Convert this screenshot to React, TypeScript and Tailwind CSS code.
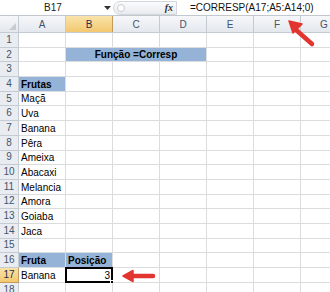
const COLS = ["A", "B", "C", "D", "E", "F", "G"];

type Cell = { text?: string; bold?: boolean; fill?: boolean; right?: boolean; span?: number; center?: boolean; selected?: boolean };

const rows: Record<number, Record<number, Cell>> = {
  2: { 1: { text: "Função =Corresp", bold: true, fill: true, span: 3, center: true } },
  4: { 0: { text: "Frutas", bold: true, fill: true } },
  5: { 0: { text: "Maçã" } },
  6: { 0: { text: "Uva" } },
  7: { 0: { text: "Banana" } },
  8: { 0: { text: "Pêra" } },
  9: { 0: { text: "Ameixa" } },
  10: { 0: { text: "Abacaxi" } },
  11: { 0: { text: "Melancia" } },
  12: { 0: { text: "Amora" } },
  13: { 0: { text: "Goiaba" } },
  14: { 0: { text: "Jaca" } },
  16: { 0: { text: "Fruta", bold: true, fill: true }, 1: { text: "Posição", bold: true, fill: true } },
  17: { 0: { text: "Banana" }, 1: { text: "3", right: true, selected: true } },
};

function SheetRow({ n }: { n: number }) {
  const def = rows[n] ?? {};
  const cells = [];
  for (let c = 0; c < COLS.length; c++) {
    const cell = def[c];
    const span = cell?.span ?? 1;
    cells.push(
      <div
        key={c}
        style={{ width: 47 * span }}
        className={`relative flex h-full shrink-0 items-end px-[2px] pb-[1px] leading-none text-[10px] text-black border-r border-b border-[#dadcdd] ${
          cell?.fill ? "bg-[#95b3d7]" : "bg-white"
        } ${cell?.bold ? "font-bold" : ""} ${cell?.right ? "justify-end" : ""} ${cell?.center ? "justify-center" : ""}`}
      >
        {cell?.text}
        {cell?.selected && (
          <>
            <div className="absolute -left-px -top-px bottom-[-1px] right-[-1px] border-2 border-black" />
            <div className="absolute -bottom-[3px] -right-[3px] h-[5px] w-[5px] border border-white bg-black" />
          </>
        )}
      </div>
    );
    c += span - 1;
  }
  const active = n === 17;
  return (
    <div className="flex h-[14.7px] shrink-0">
      <div
        className={`flex h-full w-[19px] shrink-0 items-center justify-center border-r border-b text-[10px] leading-none ${
          active
            ? "border-[#c29b5c] bg-gradient-to-b from-[#f9e3a9] to-[#f3c86f] text-[#1e2f4a]"
            : "border-[#c5cbd3] bg-[#e9edf2] text-[#44546a]"
        }`}
      >
        {n}
      </div>
      {cells}
    </div>
  );
}

export default function App() {
  const nums = Array.from({ length: 18 }, (_, i) => i + 1);
  return (
    <div className="relative h-[292px] w-[330px] overflow-hidden bg-white font-['Liberation_Sans',Arial,sans-serif]">
      {/* Formula bar */}
      <div className="flex h-[16px] items-center border-b border-[#c3c8cf] bg-white">
        <div className="flex h-full w-[113px] shrink-0 items-center">
          <span className="flex-1 pl-[2px] text-center text-[10px] text-[#222]">B17</span>
          <svg width="7" height="4" viewBox="0 0 7 4" className="mr-[2px]">
            <path d="M0 0h7L3.5 4z" fill="#333" />
          </svg>
        </div>
        <div className="relative flex h-[14px] w-[64px] shrink-0 items-center justify-end rounded-l-full border border-[#d3d7dc] bg-gradient-to-b from-[#fafbfc] to-[#e8ebee] pr-[3px]">
          <div className="absolute left-[3px] top-[2px] h-[8px] w-[8px] rounded-full border border-[#c6cad0] bg-white" />
          <span className="font-['Liberation_Serif',serif] text-[10px] font-bold italic text-[#333]">fx</span>
        </div>
        <span className="ml-[13px] whitespace-nowrap text-[10px] text-[#111]">=CORRESP(A17;A5:A14;0)</span>
      </div>

      {/* Column headers */}
      <div className="flex h-[17px] border-b border-[#c5cbd3] bg-gradient-to-b from-[#f6f7f9] to-[#e4e8ee]">
        <div className="relative h-full w-[19px] shrink-0 border-r border-[#c5cbd3]">
          <svg width="7" height="7" viewBox="0 0 7 7" className="absolute bottom-[2px] right-[2px]">
            <path d="M7 0v7H0z" fill="#c7ccd3" />
          </svg>
        </div>
        {COLS.map((c) => (
          <div
            key={c}
            className={`flex h-full w-[47px] shrink-0 items-center justify-center border-r text-[10px] ${
              c === "B"
                ? "border-[#c29b5c] bg-gradient-to-b from-[#f9e3a9] to-[#f3c86f] text-[#1e2f4a]"
                : "border-[#c5cbd3] text-[#44546a]"
            }`}
          >
            {c}
          </div>
        ))}
      </div>

      {nums.map((n) => (
        <SheetRow key={n} n={n} />
      ))}

      {/* Arrow pointing to formula bar */}
      <svg className="absolute left-[278px] top-[12px]" width="40" height="36" viewBox="0 0 40 36">
        <path d="M34 32 L17 17" stroke="#e2352f" strokeWidth="4.5" strokeLinecap="round" />
        <path d="M11 9 L24 12 L15 21 Z" fill="#e2352f" stroke="#e2352f" strokeWidth="1.5" strokeLinejoin="round" />
      </svg>

      {/* Arrow pointing to B17 */}
      <svg className="absolute left-[120px] top-[268px]" width="38" height="16" viewBox="0 0 38 16">
        <path d="M33 8 H12" stroke="#e2352f" strokeWidth="4.5" strokeLinecap="round" />
        <path d="M3 8 L13 2.5 L13 13.5 Z" fill="#e2352f" stroke="#e2352f" strokeWidth="1.5" strokeLinejoin="round" />
      </svg>
    </div>
  );
}
